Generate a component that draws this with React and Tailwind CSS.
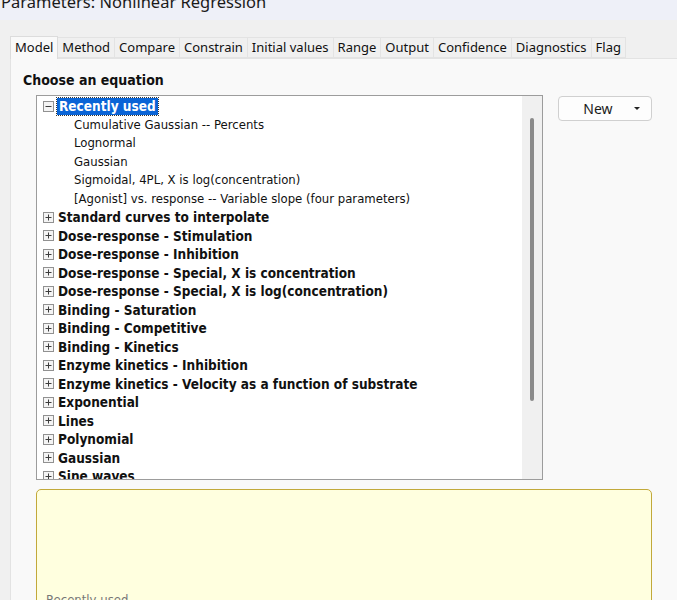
import { useState } from "react";

const tabs = ["Model", "Method", "Compare", "Constrain", "Initial values", "Range", "Output", "Confidence", "Diagnostics", "Flag"];

const recent = [
  "Cumulative Gaussian -- Percents",
  "Lognormal",
  "Gaussian",
  "Sigmoidal, 4PL, X is log(concentration)",
  "[Agonist] vs. response -- Variable slope (four parameters)",
];

const groups = [
  "Standard curves to interpolate",
  "Dose-response - Stimulation",
  "Dose-response - Inhibition",
  "Dose-response - Special, X is concentration",
  "Dose-response - Special, X is log(concentration)",
  "Binding - Saturation",
  "Binding - Competitive",
  "Binding - Kinetics",
  "Enzyme kinetics - Inhibition",
  "Enzyme kinetics - Velocity as a function of substrate",
  "Exponential",
  "Lines",
  "Polynomial",
  "Gaussian",
  "Sine waves",
];

// little +/- box used by the tree
function Expander({ open }) {
  return (
    <svg width="11" height="11" viewBox="0 0 11 11" className="shrink-0">
      <rect x="0.5" y="0.5" width="10" height="10" fill="#f4f4f4" stroke="#919191" />
      <line x1="2.5" y1="5.5" x2="8.5" y2="5.5" stroke="#3c3c3c" />
      {!open && <line x1="5.5" y1="2.5" x2="5.5" y2="8.5" stroke="#3c3c3c" />}
    </svg>
  );
}

export default function App() {
  const [active] = useState("Model");
  const tree = { fontFamily: '"DejaVu Sans Condensed", "DejaVu Sans", sans-serif' };
  const ui = { fontFamily: '"Noto Sans", "Open Sans", sans-serif' };

  return (
    <div className="w-[677px] h-[600px] overflow-hidden bg-[#f0f0f0] flex flex-col" style={ui}>
      {/* title bar, cut at the top */}
      <div className="h-[20px] shrink-0 bg-[#eef0f8] overflow-hidden">
        <div className="text-[16.5px] leading-[20px] text-[#1a1a1a] -mt-[8px] pl-[1px] whitespace-nowrap">Parameters: Nonlinear Regression</div>
      </div>

      <div className="h-[16px] shrink-0" />

      {/* tab strip */}
      <div className="flex pl-[10px] h-[22px] shrink-0 items-end">
        {tabs.map((t) => (
          <div
            key={t}
            className={
              t === active
                ? "h-[23px] px-[4px] bg-[#f9f9f9] border border-[#dcdcdc] border-b-0 text-[13px] leading-[21px] text-[#111] -mb-px relative z-10"
                : "h-[21px] px-[4px] bg-[#f0f0f0] border border-[#e3e3e3] border-l-0 text-[13px] leading-[19px] text-[#111]"
            }
          >
            {t}
          </div>
        ))}
      </div>

      {/* page body */}
      <div className="flex-1 shrink-0 ml-[10px] bg-[#f9f9f9] border-t border-l border-[#e3e3e3] pl-[12px] pt-[12px]">
        <div className="text-[14px] font-bold leading-[18px] text-[#111]" style={tree}>Choose an equation</div>

        <div className="flex mt-[6px] gap-[15px]">
          <div className="ml-[13px] w-[507px] h-[385px] border border-[#9c9c9c] bg-white flex">
            <div className="flex-1 overflow-hidden pt-[1px] pl-[6px]" style={tree}>
              <div className="flex items-center h-[18.5px] gap-[3px]">
                <Expander open />
                <span className="bg-[#0a64d6] text-white font-bold text-[13.5px] px-[2px] leading-[17px] outline outline-1 outline-dotted outline-[#333]">
                  Recently used
                </span>
              </div>
              {recent.map((r) => (
                <div key={r} className="h-[18.5px] pl-[31px] text-[13px] leading-[18.5px] text-[#111] whitespace-nowrap">
                  {r}
                </div>
              ))}
              {groups.map((g) => (
                <div key={g} className="flex items-center h-[18.5px] gap-[4px] whitespace-nowrap">
                  <Expander />
                  <span className="font-bold text-[13.5px] leading-[18.5px] text-[#111]">{g}</span>
                </div>
              ))}
            </div>
            {/* scrollbar */}
            <div className="w-[20px] bg-[#f0f0f0] flex justify-center pt-[22px]">
              <div className="w-[4px] h-[283px] rounded-full bg-[#8a8a8a]" />
            </div>
          </div>

          <button className="mt-[1px] w-[94px] h-[25px] bg-[#fdfdfd] border border-[#d0d0d0] rounded-[4px] flex items-center text-[14px] text-[#1a1a1a]">
            <span className="flex-1 text-center pl-[3px]">New</span>
            <svg width="6" height="4" viewBox="0 0 6 4" className="mr-[11px]">
              <path d="M0 0 L6 0 L3 3 Z" fill="#222" />
            </svg>
          </button>
        </div>

        {/* description box */}
        <div className="ml-[13px] mt-[9px] w-[616px] h-[140px] bg-[#ffffdf] border border-[#c2a93a] rounded-t-[5px] pl-[9px] pt-[100px]">
          <div className="text-[13px] text-[#777]" style={tree}>Recently used</div>
        </div>
      </div>
    </div>
  );
}
